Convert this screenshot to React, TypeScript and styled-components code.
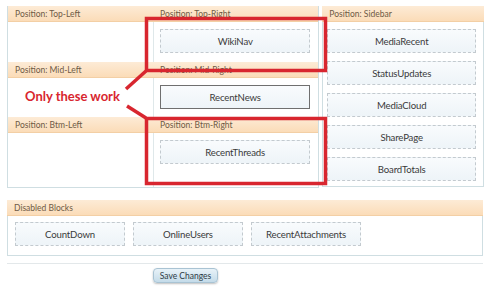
import styled, { createGlobalStyle } from 'styled-components';

const GlobalStyle = createGlobalStyle`
  html, body {
    margin: 0;
    padding: 0;
    background: #ffffff;
  }
  * {
    box-sizing: border-box;
  }
`;

const Page = styled.div`
  position: relative;
  width: 493px;
  height: 300px;
  padding: 6px 9px 0 7px;
  font-family: Lato, 'Liberation Sans', sans-serif;
  overflow: hidden;
`;

const Layout = styled.div`
  display: flex;
  gap: 3px;
`;

const MainTable = styled.div`
  width: 313px;
  border: 1px solid #cfdee2;
  border-top: none;
`;

const PositionRow = styled.div`
  display: grid;
  grid-template-columns: 145px 1fr;
`;

const Header = styled.div`
  height: 16px;
  padding: 0 7px;
  display: flex;
  align-items: center;
  font-size: 8.5px;
  color: #6e5a45;
  background: linear-gradient(#fdebd6, #fbdcb8);
  border-bottom: 1px solid #f3cfa5;
`;

const Cell = styled.div<{ $height: number; $divider?: boolean }>`
  height: ${(p) => p.$height}px;
  padding: 7px 8px 0 6px;
  border-left: ${(p) => (p.$divider ? '1px solid #dfe8ea' : 'none')};
`;

const Sidebar = styled.div`
  width: 162px;
`;

const SidebarBody = styled.div`
  height: 165px;
  border: 1px solid #cfdee2;
  border-top: none;
  padding: 7px 7px 0 4px;
  display: flex;
  flex-direction: column;
  gap: 8px;
`;

const Block = styled.div<{ $solid?: boolean; $width?: number }>`
  height: 24px;
  width: ${(p) => (p.$width ? `${p.$width}px` : 'auto')};
  display: flex;
  align-items: center;
  justify-content: center;
  font-size: 9.6px;
  letter-spacing: -0.15px;
  color: #3a3a3a;
  background: linear-gradient(#f9fbfd, #eef4f8);
  border: 1px ${(p) => (p.$solid ? 'solid #6f6f6f' : 'dashed #c3cacf')};
`;

const Disabled = styled.div`
  margin-top: 12px;
  width: 476px;
`;

const DisabledBody = styled.div`
  height: 40px;
  border: 1px solid #cfdee2;
  border-top: none;
  padding: 6px 7px 0;
  display: flex;
  gap: 8px;
`;

const Separator = styled.div`
  width: 476px;
  margin-top: 7px;
  border-top: 1px solid #e3e8ea;
`;

const ButtonRow = styled.div`
  display: flex;
  padding: 4px 0 0 146px;
`;

const SaveButton = styled.button`
  width: 65px;
  height: 15px;
  padding: 0;
  font-family: Lato, 'Liberation Sans', sans-serif;
  font-size: 8.5px;
  color: #2d3a44;
  border: 1px solid #a9c3d3;
  border-radius: 4px;
  background: linear-gradient(#e8f2f8, #c4dbe9);
  box-shadow: 0 1px 2px rgba(0, 0, 0, 0.25);
`;

const Overlay = styled.svg`
  position: absolute;
  left: 0;
  top: 0;
  pointer-events: none;
`;

const Note = styled.div`
  position: absolute;
  left: 25px;
  top: 88px;
  font-family: Lato, 'Liberation Sans', sans-serif;
  font-weight: 700;
  font-size: 13px;
  color: #d8262f;
`;

const rows = [
  { left: 'Position: Top-Left', right: 'Position: Top-Right', block: 'WikiNav', height: 40 },
  { left: 'Position: Mid-Left', right: 'Position: Mid-Right', block: 'RecentNews', height: 39, solid: true },
  { left: 'Position: Btm-Left', right: 'Position: Btm-Right', block: 'RecentThreads', height: 54 },
];

const sidebarBlocks = ['MediaRecent', 'StatusUpdates', 'MediaCloud', 'SharePage', 'BoardTotals'];
const disabledBlocks = ['CountDown', 'OnlineUsers', 'RecentAttachments'];

const App = () => {
  return (
    <>
      <GlobalStyle />
      <Page>
        <Layout>
          <MainTable>
            {rows.map((row) => (
              <PositionRow key={row.left}>
                <Header>{row.left}</Header>
                <Header>{row.right}</Header>
                <Cell $height={row.height} />
                <Cell $height={row.height} $divider>
                  <Block $solid={row.solid}>{row.block}</Block>
                </Cell>
              </PositionRow>
            ))}
          </MainTable>
          <Sidebar>
            <Header>Position: Sidebar</Header>
            <SidebarBody>
              {sidebarBlocks.map((b) => (
                <Block key={b}>{b}</Block>
              ))}
            </SidebarBody>
          </Sidebar>
        </Layout>

        <Disabled>
          <Header>Disabled Blocks</Header>
          <DisabledBody>
            {disabledBlocks.map((b) => (
              <Block key={b} $width={110}>
                {b}
              </Block>
            ))}
          </DisabledBody>
        </Disabled>
        <Separator />
        <ButtonRow>
          <SaveButton>Save Changes</SaveButton>
        </ButtonRow>

        <Overlay width="493" height="300" viewBox="0 0 493 300">
          <g fill="none" stroke="#d8262f" strokeWidth="3.5">
            <rect x="146.5" y="18.5" width="179" height="52" />
            <rect x="146.5" y="118.5" width="179" height="65" />
            <line x1="126" y1="89" x2="146" y2="71" />
            <line x1="127" y1="106" x2="146" y2="118" />
          </g>
        </Overlay>
        <Note>Only these work</Note>
      </Page>
    </>
  );
};

export default App;
